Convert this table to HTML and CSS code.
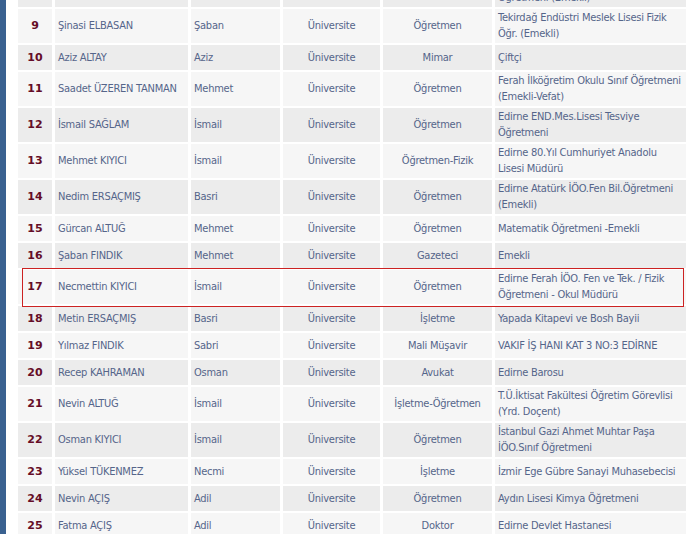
FILE: index.html
```html
<!DOCTYPE html>
<html lang="tr">
<head>
<meta charset="utf-8">
<title>Mezunlar</title>
<link rel="stylesheet" href="styles.css">
</head>
<body>
<div class="page">
  <div class="sidebar"></div>
  <div class="content">
    <table class="list">
      <colgroup>
        <col class="w-no"><col class="w-name"><col class="w-father"><col class="w-edu"><col class="w-job"><col class="w-work">
      </colgroup>
      <tbody>
        <tr class="even"><td class="no">8</td><td>Ayşe ELBASAN</td><td>Şaban</td><td class="c">Üniversite</td><td class="c">Öğretmen</td><td>Edirne Lisesi Edebiyat<br>Öğretmeni (Emekli)</td></tr>
        <tr class="odd"><td class="no">9</td><td>Şinasi ELBASAN</td><td>Şaban</td><td class="c">Üniversite</td><td class="c">Öğretmen</td><td>Tekirdağ Endüstri Meslek Lisesi Fizik Öğr. (Emekli)</td></tr>
        <tr class="even"><td class="no">10</td><td>Aziz ALTAY</td><td>Aziz</td><td class="c">Üniversite</td><td class="c">Mimar</td><td>Çiftçi</td></tr>
        <tr class="odd"><td class="no">11</td><td>Saadet ÜZEREN TANMAN</td><td>Mehmet</td><td class="c">Üniversite</td><td class="c">Öğretmen</td><td>Ferah İlköğretim Okulu Sınıf Öğretmeni (Emekli-Vefat)</td></tr>
        <tr class="even"><td class="no">12</td><td>İsmail SAĞLAM</td><td>İsmail</td><td class="c">Üniversite</td><td class="c">Öğretmen</td><td>Edirne END.Mes.Lisesi Tesviye Öğretmeni</td></tr>
        <tr class="odd"><td class="no">13</td><td>Mehmet KIYICI</td><td>İsmail</td><td class="c">Üniversite</td><td class="c">Öğretmen-Fizik</td><td>Edirne 80.Yıl Cumhuriyet Anadolu Lisesi Müdürü</td></tr>
        <tr class="even"><td class="no">14</td><td>Nedim ERSAÇMIŞ</td><td>Basri</td><td class="c">Üniversite</td><td class="c">Öğretmen</td><td>Edirne Atatürk İÖO.Fen Bil.Öğretmeni (Emekli)</td></tr>
        <tr class="odd"><td class="no">15</td><td>Gürcan ALTUĞ</td><td>Mehmet</td><td class="c">Üniversite</td><td class="c">Öğretmen</td><td>Matematik Öğretmeni -Emekli</td></tr>
        <tr class="even"><td class="no">16</td><td>Şaban FINDIK</td><td>Mehmet</td><td class="c">Üniversite</td><td class="c">Gazeteci</td><td>Emekli</td></tr>
        <tr class="odd hl"><td class="no">17</td><td>Necmettin KIYICI</td><td>İsmail</td><td class="c">Üniversite</td><td class="c">Öğretmen</td><td>Edirne Ferah İÖO. Fen ve Tek. / Fizik Öğretmeni - Okul Müdürü</td></tr>
        <tr class="even"><td class="no">18</td><td>Metin ERSAÇMIŞ</td><td>Basri</td><td class="c">Üniversite</td><td class="c">İşletme</td><td>Yapada Kitapevi ve Bosh Bayii</td></tr>
        <tr class="odd"><td class="no">19</td><td>Yılmaz FINDIK</td><td>Sabri</td><td class="c">Üniversite</td><td class="c">Mali Müşavir</td><td>VAKIF İŞ HANI KAT 3 NO:3 EDİRNE</td></tr>
        <tr class="even"><td class="no">20</td><td>Recep KAHRAMAN</td><td>Osman</td><td class="c">Üniversite</td><td class="c">Avukat</td><td>Edirne Barosu</td></tr>
        <tr class="odd"><td class="no">21</td><td>Nevin ALTUĞ</td><td>İsmail</td><td class="c">Üniversite</td><td class="c">İşletme-Öğretmen</td><td>T.Ü.İktisat Fakültesi Öğretim Görevlisi (Yrd. Doçent)</td></tr>
        <tr class="even"><td class="no">22</td><td>Osman KIYICI</td><td>İsmail</td><td class="c">Üniversite</td><td class="c">Öğretmen</td><td>İstanbul Gazi Ahmet Muhtar Paşa İÖO.Sınıf Öğretmeni</td></tr>
        <tr class="odd"><td class="no">23</td><td>Yüksel TÜKENMEZ</td><td>Necmi</td><td class="c">Üniversite</td><td class="c">İşletme</td><td>İzmir Ege Gübre Sanayi Muhasebecisi</td></tr>
        <tr class="even"><td class="no">24</td><td>Nevin AÇIŞ</td><td>Adil</td><td class="c">Üniversite</td><td class="c">Öğretmen</td><td>Aydın Lisesi Kimya Öğretmeni</td></tr>
        <tr class="odd"><td class="no">25</td><td>Fatma AÇIŞ</td><td>Adil</td><td class="c">Üniversite</td><td class="c">Doktor</td><td>Edirne Devlet Hastanesi</td></tr>
      </tbody>
    </table>
  </div>
</div>
</body>
</html>
```
FILE: styles.css
```css
html, body {
  margin: 0;
  padding: 0;
  background: #ffffff;
}

body {
  font-family: "DejaVu Sans Condensed", "DejaVu Sans", Tahoma, sans-serif;
  font-size: 11px;
  letter-spacing: -0.25px;
  color: #55658a;
  overflow: hidden;
}

.page {
  display: flex;
  align-items: stretch;
}

.sidebar {
  flex: none;
  width: 6px;
  background: #3a6190;
}

.content {
  flex: none;
  padding-left: 9px;
}

.list {
  border-collapse: separate;
  border-spacing: 3px 2px;
  table-layout: fixed;
  width: 674px;
  margin-top: -29px;
}

.w-no { width: 34px; }
.w-name { width: 133px; }
.w-father { width: 89px; }
.w-edu { width: 97px; }
.w-job { width: 109px; }
.w-work { width: 191px; }

.list tr {
  height: 25px;
}

.list td {
  padding: 1px 3px;
  line-height: 16px;
  vertical-align: middle;
  text-align: left;
}

.list tr.odd td { background: #f6f6f6; }
.list tr.even td { background: #ececec; }

.list td.c { text-align: center; }

.list td.no {
  text-align: center;
  font-family: "DejaVu Sans", Verdana, sans-serif;
  font-weight: bold;
  letter-spacing: 0;
  color: #650d27;
}

.list tr.hl {
  position: relative;
}

.list tr.hl::after {
  content: "";
  position: absolute;
  left: 4px;
  right: 5px;
  top: -2px;
  bottom: -3px;
  border: 1px solid #cc2222;
  pointer-events: none;
}
```
